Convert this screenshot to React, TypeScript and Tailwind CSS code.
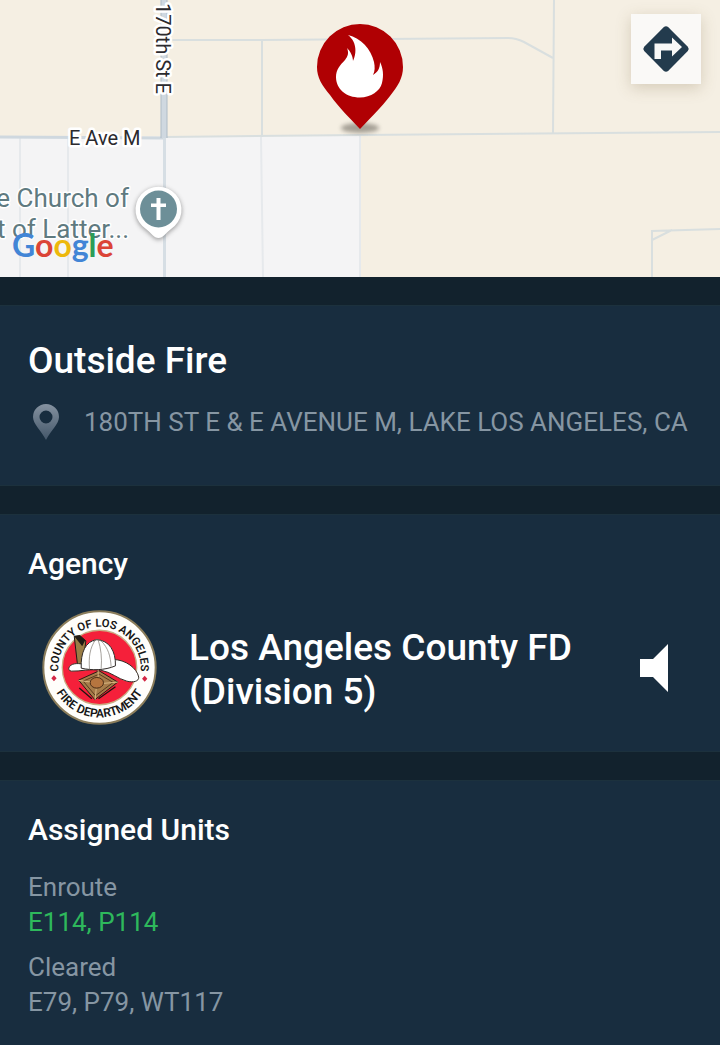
import React from "react";

const enroute = ["E114", "P114"];
const cleared = ["E79", "P79", "WT117"];

function DirectionsIcon() {
  return (
    <svg viewBox="0 0 48 48" className="h-12 w-12" aria-hidden="true">
      <path d="M21.9 2 L2.2 21.8 Q0.4 24 2.2 26 L21.9 46 Q24 47.6 26.1 46 L45.8 26 Q47.6 24 45.8 21.8 L26.1 2 Q24 0.4 21.9 2 Z" fill="#233b4d" />
      <path d="M12.5 34 V18.5 H30 V12.5 L40 22 L30 31.5 V25.5 H19 V34 Z" fill="#f8f8f7" />
    </svg>
  );
}

function MapCanvas() {
  return (
    <svg viewBox="0 0 720 277" preserveAspectRatio="xMidYMin slice" className="absolute inset-0 h-full w-full" style={{ fontFamily: "Roboto, sans-serif" }} role="img" aria-label="Map of 180th St E and E Avenue M">
      <defs>
        <filter id="soft" x="-50%" y="-50%" width="200%" height="200%">
          <feGaussianBlur stdDeviation="2" />
        </filter>
      </defs>
      <rect width="720" height="277" fill="#f5efe3" />
      <path d="M0 137 L360 136 V277 H0 Z" fill="#f4f4f5" />

      {/* minor roads */}
      <g fill="none" stroke="#d9dfdf" strokeWidth="2">
        <path d="M165 40 H262 L508 38 Q516 38 524 42 L553 58" />
        <path d="M262 40 V137" />
        <path d="M554 0 L553 133" />
        <path d="M165 137 L360 135 L720 132" />
        <path d="M652 277 V231 L720 229 M652 240 L672 230" />
      </g>
      <g fill="none" stroke="#e6e9ec" strokeWidth="2">
        <path d="M20 138 V277 M68 138 V277 M261 137 L263 277 M360 136 V277" />
      </g>
      <path d="M0 137 L165 138" stroke="#cfd8df" strokeWidth="3" />
      <path d="M164.500 138 V277" stroke="#d6dee4" strokeWidth="3" />
      <path d="M164 0 V138" stroke="#aebcc7" strokeWidth="7" />
      <path d="M164 0 V138" stroke="#cfd8e0" strokeWidth="5" />

      {/* road names */}
      <g fill="#2b2a2e" stroke="#fff" strokeWidth="5" strokeLinejoin="round" paintOrder="stroke" fontSize="20">
        <text x="69" y="145">E Ave M</text>
        <text transform="translate(156 3) rotate(90)">170th St E</text>
      </g>

      {/* church */}
      <g fill="#5f7a80" stroke="#fff" strokeWidth="3" strokeLinejoin="round" paintOrder="stroke" fontSize="26" textAnchor="end">
        <text x="129" y="207">e Church of</text>
        <text x="129" y="238">t of Latter...</text>
      </g>
      <path d="M158.500 240 C154 240 151 235 146 231 A23.500 23.500 0 1 1 171 231 C166 235 163 240 158.500 240 Z" fill="#555" opacity="0.5" filter="url(#soft)" />
      <path d="M158.500 238 C154 238 151 233 146 229 A23 23 0 1 1 171 229 C166 233 163 238 158.500 238 Z" fill="#fff" />
      <circle cx="158.500" cy="209" r="18.500" fill="#6d8f98" />
      <path d="M156.500 198 H160.500 V203.500 H166 V207 H160.500 V220 H156.500 V207 H151 V203.500 H156.500 Z" fill="#fff" />

      {/* incident marker */}
      <ellipse cx="360" cy="128" rx="19" ry="5" fill="#6f6a60" opacity="0.6" filter="url(#soft)" />
      <path d="M360 129 C349 117 339 108 330 95 C322 85 317 78 317 67 A43 43 0 0 1 403 67 C403 78 398 86 390 96 C381 108 371 117 360 129 Z" fill="#b00003" />
      <path d="M348 35 C361 38 371 49 374 62 C375 67 375 71 373 75 C378 72 380 68 380 62 C383 68 384 75 382 83 C380 91 371 97.500 360 97.500 C346 97.500 336 89 336 77 C336 70 340 65 345 60 C348 56 349 53 347 48 C350 51 353 56 353 61 C356 55 358 43 348 35 Z" fill="#fff" />
    </svg>
  );
}

function PinIcon() {
  return (
    <svg viewBox="0 0 28 38" className="h-[38px] w-7 shrink-0" aria-hidden="true">
      <defs>
        <linearGradient id="pin" x1="0" y1="0" x2="0" y2="1">
          <stop offset="0" stopColor="#8592a0" />
          <stop offset="1" stopColor="#435669" />
        </linearGradient>
      </defs>
      <path fillRule="evenodd" d="M14 1 A13 13 0 0 0 1 14 C1 21 9 27 14 37 C19 27 27 21 27 14 A13 13 0 0 0 14 1 Z M14 7.500 A6.500 6.500 0 1 1 14 20.500 A6.500 6.500 0 1 1 14 7.500 Z" fill="url(#pin)" />
    </svg>
  );
}

function AgencySeal() {
  return (
    <svg viewBox="36 29 346 346" className="h-[115px] w-[115px] shrink-0" style={{ fontFamily: "Roboto, sans-serif" }} role="img" aria-label="County of Los Angeles Fire Department seal">
      <defs>
        <path id="seal-top" d="M102 266 A124 124 0 1 1 316 266" />
        <path id="seal-bottom" d="M59 202 A150 150 0 0 0 359 202" />
      </defs>
      <circle cx="209" cy="202" r="169" fill="#fffefb" stroke="#8b7d5b" strokeWidth="6" />
      <circle cx="209" cy="202" r="112" fill="#f5203a" stroke="#c9ad84" strokeWidth="4" />
      <g fill="#161616" fontSize="34" fontWeight="600" textAnchor="middle">
        <text><textPath href="#seal-top" startOffset="50%">COUNTY OF LOS ANGELES</textPath></text>
        <text fontSize="36"><textPath href="#seal-bottom" startOffset="50%">FIRE DEPARTMENT</textPath></text>
      </g>
      <path d="M72 225 L80 234 L72 243 L64 234 Z M345 227 L353 236 L345 245 L337 236 Z" fill="#d32644" />

      {/* helmet */}
      <path d="M133 108 L150 106 L168 122 L158 202 L143 196 Z" fill="#9a7d45" stroke="#1f1a14" strokeWidth="3" />
      <path d="M133 108 L150 106 L166 120 L157 138 Z" fill="#1f1a14" />
      <path d="M117 203 C121 190 142 188 158 192 L250 178 C287 178 322 204 327 231 C328 244 310 248 291 243 C264 236 245 216 213 210 C180 205 151 214 124 213 C117 211 115 207 117 203 Z" fill="#fff" stroke="#332b24" strokeWidth="3" />
      <path d="M154 204 C152 158 166 123 201 118 C238 121 258 151 257 197 C225 211 185 211 154 204 Z" fill="#fff" stroke="#302a27" strokeWidth="3" />
      <path d="M197 119 C180 142 176 172 179 207 M205 119 C213 143 217 174 214 205 M213 121 C236 144 242 168 244 200 M190 124 Q201 113 215 123" fill="none" stroke="#77716a" strokeWidth="2" />

      {/* badge */}
      <path d="M208 212 L264 246 L195 299 L146 240 Z" fill="#a67c4a" stroke="#2b1c12" strokeWidth="3" />
      <path d="M208 222 L250 247 L197 287 L160 243 Z" fill="none" stroke="#5b3a1e" strokeWidth="3" />
      <path d="M205 210 V232 M146 241 L184 246 M196 299 L199 266 M264 246 L218 250" stroke="#d9b681" strokeWidth="3" />
      <path d="M148 264 L186 296 M206 296 L257 260" stroke="#1f1610" strokeWidth="4" />
      <ellipse cx="201" cy="248" rx="20" ry="16" fill="#b6753f" stroke="#4d2e17" strokeWidth="3" />
    </svg>
  );
}

export default function App() {
  return (
    <main className="flex min-h-screen flex-col gap-7 bg-[#12222d] font-[Roboto,sans-serif] text-white">
      <section className="relative h-[277px] overflow-hidden">
        <MapCanvas />
        <div className="absolute bottom-3 left-3 font-[Lato,sans-serif] text-[32px] leading-10 font-bold">
          <span className="text-[#4285d6]">G</span>
          <span className="text-[#db4437]">o</span>
          <span className="text-[#edb80c]">o</span>
          <span className="text-[#4285d6]">g</span>
          <span className="text-[#2c9d57]">l</span>
          <span className="text-[#db4437]">e</span>
        </div>
        <button type="button" aria-label="Directions" className="absolute top-[14px] right-[19px] flex h-[70px] w-[70px] items-center justify-center bg-[#faf9f7] shadow-[0_4px_14px_rgba(120,100,60,0.25)]">
          <DirectionsIcon />
        </button>
      </section>

      <section className="border-y border-[#1c313d] bg-[#182d3f] px-7 pt-[31px] pb-11">
        <h1 className="text-[37px] leading-12 font-medium">Outside Fire</h1>
        <div className="mt-[18px] flex items-center gap-6 pl-1">
          <PinIcon />
          <p className="text-[26px] leading-8 whitespace-nowrap text-[#8696a3]">180TH ST E & E AVENUE M, LAKE LOS ANGELES, CA</p>
        </div>
      </section>

      <section className="border-y border-[#1c313d] bg-[#182d3f] px-7 pt-[31px] pb-[26px]">
        <h2 className="text-[30px] leading-9 font-medium">Agency</h2>
        <div className="mt-7 flex items-center pr-6 pl-[14px]">
          <AgencySeal />
          <p className="ml-8 flex-1 pt-1 text-[37px] leading-11 font-medium">
            Los Angeles County FD
            <br />
            (Division 5)
          </p>
          <button type="button" aria-label="Play agency audio">
            <svg viewBox="0 0 28 48" className="h-12 w-7" aria-hidden="true">
              <path d="M0 15 H13 L28 0 V48 L13 33 H0 Z" fill="#fff" />
            </svg>
          </button>
        </div>
      </section>

      <section className="flex-1 border-t border-[#1c313d] bg-[#182d3f] px-7 pt-[31px] pb-6">
        <h2 className="text-[30px] leading-9 font-medium">Assigned Units</h2>
        <dl className="mt-[22px] text-[26px] leading-[35px] text-[#8696a3]">
          <dt>Enroute</dt>
          <dd className="text-[#2eb85c]">{enroute.join(", ")}</dd>
          <dt className="mt-[10px]">Cleared</dt>
          <dd>{cleared.join(", ")}</dd>
        </dl>
      </section>
    </main>
  );
}
